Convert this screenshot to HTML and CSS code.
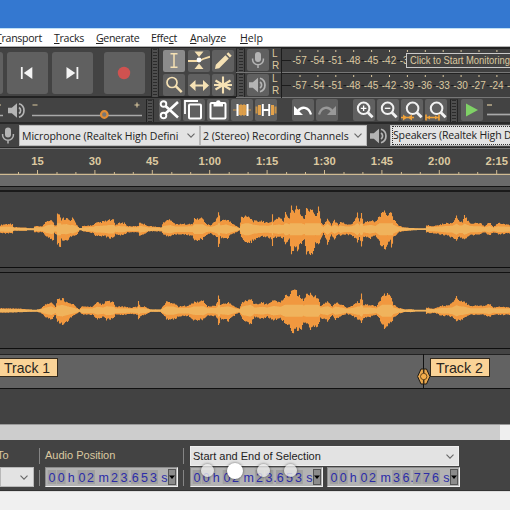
FILE: index.html
```html
<!DOCTYPE html>
<html lang="en">
<head>
<meta charset="utf-8">
<title>Audio editor</title>
<link rel="stylesheet" href="styles.css">
</head>
<body>
<svg class="defs" width="0" height="0">
  <symbol id="mic" viewBox="0 0 16 18"><rect x="5" y="1" width="6" height="10" rx="3" fill="#b4b4b4"/><path d="M2.6 7.5v1.2a5.4 5 0 0 0 10.8 0V7.5M8 13.8V17" fill="none" stroke="#b4b4b4" stroke-width="1.5"/></symbol>
  <symbol id="speaker" viewBox="0 0 18 16"><path d="M0 5.2h3.8L9 .8v14.4L3.8 10.8H0z" fill="#b4b4b4"/><path d="M11 5a3.6 3.6 0 0 1 0 6M11 1.3a7 7 0 0 1 0 13.4" fill="none" stroke="#b4b4b4" stroke-width="1.7"/></symbol>
  <symbol id="lens" viewBox="0 0 22 22"><circle cx="10.6" cy="9.3" r="5.8" fill="none" stroke="#f2f2f2" stroke-width="2"/><path d="M14.8 13.5l4.800 4.800" stroke="#f2f2f2" stroke-width="2.8"/></symbol>
  <symbol id="chevron" viewBox="0 0 8 5"><path d="M.5.6L4 4.1 7.5.6" fill="none" stroke="#666" stroke-width="1.1"/></symbol>
</svg>

<header class="titlebar"></header>
<nav class="menu">
  <span class="m-transport"><u>T</u>ransport</span><span class="m-tracks"><u>T</u>racks</span><span class="m-generate"><u>G</u>enerate</span><span class="m-effect">Effe<u>c</u>t</span><span class="m-analyze"><u>A</u>nalyze</span><span class="m-help"><u>H</u>elp</span>
</nav>

<section class="upper">
  <div class="transport">
    <button class="big first"></button>
    <button class="big"><svg width="14" height="14" viewBox="0 0 14 14"><path d="M1.8 1v12" stroke="#f4f4f4" stroke-width="1.8"/><path d="M12.300 1v12L3.800 7z" fill="#f4f4f4"/></svg></button>
    <button class="big"><svg width="14" height="14" viewBox="0 0 14 14"><path d="M12.4 1v12" stroke="#f4f4f4" stroke-width="1.8"/><path d="M1.5 1v12L10.3 7z" fill="#f4f4f4"/></svg></button>
    <button class="big record"><svg width="14" height="14"><circle cx="7" cy="7" r="6.2" fill="#cf5250"/></svg></button>
  </div>
  <i class="grip"></i>
  <div class="tools">
    <button class="sq on"><svg width="22" height="22"><path d="M7.5 3.8h7M7.5 17.2h7M11 3.8v13.4" fill="none" stroke="#f5e1b4" stroke-width="1.5"/></svg></button>
    <button class="sq"><svg width="22" height="22"><path d="M6.5 1.500h9L11 7zM6.500 19h9L11 13.500z" fill="#f5e1b4"/><path d="M0 11h11l4-2 7-2.300" fill="none" stroke="#f5dca8" stroke-width="1.800"/><circle cx="11" cy="10" r="2.400" fill="#fff"/></svg></button>
    <button class="sq"><svg width="22" height="22"><path d="M3 19l.8-4.2L13.4 5.200l3.4 3.4L7.2 18.200zM14.500 4.100l1.8-1.8 3.4 3.4-1.800 1.800z" fill="#f5e1b4"/></svg></button>
    <button class="sq"><svg width="22" height="22"><circle cx="9" cy="8.500" r="5" fill="none" stroke="#f5e1b4" stroke-width="1.7"/><path d="M12.700 12.200l6 6" stroke="#f5e1b4" stroke-width="2.4"/></svg></button>
    <button class="sq"><svg width="22" height="22"><path d="M4 11.500h15" stroke="#f5e1b4" stroke-width="2"/><path d="M7.500 6l-6 5.500 6 5.500zM15 6l6 5.500-6 5.500z" fill="#f5e1b4"/></svg></button>
    <button class="sq"><svg width="22" height="22"><path d="M11 2.500v17M3.500 6.500l15 9M18.500 6.500l-15 9M2 11h18" stroke="#f5e1b4" stroke-width="2.1"/></svg></button>
  </div>
  <div class="meters">
    <div class="meter"><i class="grip"></i><button class="sq"><svg width="16" height="18"><use href="#mic"/></svg></button><div class="lr"><span>L</span><span>R</span></div><svg class="scale" data-count="7" width="229" height="25"></svg><div class="tip"><svg width="104" height="13"><text x="3" y="10" textLength="100" lengthAdjust="spacingAndGlyphs">Click to Start Monitoring</text></svg></div></div>
    <div class="meter"><i class="grip"></i><button class="sq"><svg width="18" height="16"><use href="#speaker"/></svg></button><div class="lr"><span>L</span><span>R</span></div><svg class="scale" data-count="13" width="229" height="25"></svg></div>
  </div>
</section>

<section class="lower">
  <svg class="mixer" width="146" height="24"><path d="M0 16.500h3M32 16.500h110" stroke="#a9a9a9" stroke-width="1.7"/><path d="M32.500 6h5M134.500 6h5M137 3.500v5M0 6h1" stroke="#dcc9a0" stroke-width="1.100"/><circle cx="104.300" cy="15.500" r="3.300" fill="#777" stroke="#e28d35" stroke-width="2.200"/><use href="#speaker" x="8" y="3.500" width="18" height="16"/></svg>
  <i class="grip"></i>
  <div class="edit">
    <button class="sq"><svg width="22" height="22"><circle cx="4.500" cy="5" r="2.800" fill="none" stroke="#fff" stroke-width="1.900"/><circle cx="4.500" cy="16.500" r="2.800" fill="none" stroke="#fff" stroke-width="1.900"/><path d="M6.500 7L19 18.500M6.500 14.500L19 3" stroke="#fff" stroke-width="2.600"/></svg></button>
    <button class="sq"><svg width="22" height="22"><path d="M2 15V2h13" fill="none" stroke="#fff" stroke-width="1.800"/><rect x="6" y="5.500" width="12" height="14" rx="1" fill="none" stroke="#fff" stroke-width="2"/></svg></button>
    <button class="sq"><svg width="22" height="22"><rect x="3.500" y="4" width="15" height="15.500" rx="1" fill="none" stroke="#fff" stroke-width="2"/><path d="M6.500 3.500h2.500a2.300 2.300 0 0 1 4.600 0h2.400V7.500H6.500z" fill="#fff"/></svg></button>
    <button class="sq"><svg width="22" height="22"><path d="M2 11h18" stroke="#b98d50" stroke-width="1.300"/><rect x="7.500" y="6" width="8" height="10" fill="#d79b4b"/><path d="M10 5v12M13 5v12" stroke="#e3a24b" stroke-width="1"/><path d="M6.500 5v12M16.500 5v12" stroke="#fff" stroke-width="2"/></svg></button>
    <button class="sq"><svg width="22" height="22"><path d="M1.500 7.500v7M20.500 7.500v7" stroke="#c99347" stroke-width="2"/><path d="M4.500 6v10M17.500 6v10" stroke="#e3a24b" stroke-width="3"/><path d="M7.800 5v12M14.200 5v12M8 11h6" stroke="#fff" stroke-width="1.900"/></svg></button>
    <button class="sq undo"><svg width="22" height="22"><path d="M6 12c3.500-5 10.500-4.500 13 3.500" fill="none" stroke="#fff" stroke-width="2.300"/><path d="M2 7v9h9z" fill="#fff"/></svg></button>
    <button class="sq"><svg width="22" height="22"><path d="M16 12C12.500 7 5.500 7.500 3 15.500" fill="none" stroke="#999" stroke-width="2.300"/><path d="M20 7v9h-9z" fill="#999"/></svg></button>
    <button class="sq zoomin"><svg width="22" height="22"><use href="#lens"/><path d="M7.800 9.300h5.600M10.600 6.500v5.600" stroke="#fff" stroke-width="1.300"/></svg></button>
    <button class="sq"><svg width="22" height="22"><use href="#lens"/><path d="M7.800 9.300h5.600" stroke="#fff" stroke-width="1.300"/></svg></button>
    <button class="sq"><svg width="22" height="22"><use href="#lens" x="1"/><path d="M0 18.500h13" stroke="#f0a239" stroke-width="1.500"/><path d="M2 15.500l4 3-4 3zM11 15.500l-4 3 4 3z" fill="#f0a239"/></svg></button>
    <button class="sq"><svg width="22" height="22"><use href="#lens" x="1"/><path d="M1 15.500v6M14 15.500v6M1 18.500h13" stroke="#f0a239" stroke-width="1.600"/><path d="M2 18.500l3-2v4zM13 18.500l-3-2v4z" fill="#f0a239"/></svg></button>
  </div>
  <i class="grip"></i>
  <button class="sq play"><svg width="22" height="22"><path d="M5 4.500v13L17 11z" fill="#7fd166"/></svg></button>
  <svg class="speed" width="27" height="24"><path d="M4 6h5" stroke="#dcc9a0" stroke-width="1.200"/><path d="M4 15.500h23" stroke="#a9a9a9" stroke-width="1.700"/></svg>
</section>

<section class="devices">
  <svg class="dmic" width="16" height="19"><use href="#mic"/></svg>
  <div class="drop d1"><span>Microphone (Realtek High Defini</span><svg width="8" height="5"><use href="#chevron"/></svg></div>
  <div class="drop d2"><span>2 (Stereo) Recording Channels</span><svg width="8" height="5"><use href="#chevron"/></svg></div>
  <svg class="dspk" width="18" height="16"><use href="#speaker"/></svg>
  <div class="drop d3"><span>Speakers (Realtek High D</span></div>
</section>

<svg class="ruler" width="510" height="27"></svg>
<div class="band"></div>
<svg class="wave" id="w1" width="510" height="76"></svg>
<div class="split"></div>
<svg class="wave" id="w2" width="510" height="76"></svg>
<div class="split two"></div>
<section class="labels">
  <div class="label one"><svg width="52" height="18"><text x="5" y="14" textLength="46" lengthAdjust="spacingAndGlyphs">Track 1</text></svg></div>
  <svg class="marker" width="14" height="35" viewBox="0 0 14 35"><path d="M6.500 0v35" stroke="#111" stroke-width="1"/><path d="M4 15L.600 22.500 4 30h5.500l3.400-7.500L9.500 15z" fill="#eba94f" stroke="#1d1a15"/><path d="M6.700 15v15" stroke="#3a2c18" stroke-width="1.500"/><circle cx="6.700" cy="22.500" r="3.200" fill="#f5ae4c" stroke="#4a3213" stroke-width=".8"/></svg>
  <div class="label"><svg width="54" height="18"><text x="5" y="14" textLength="47" lengthAdjust="spacingAndGlyphs">Track 2</text></svg></div>
</section>
<div class="empty"></div>
<div class="scroll"><i></i></div>

<footer class="selection">
  <div class="col snap"><span class="cap">To</span><div class="drop"><svg width="8" height="5"><use href="#chevron"/></svg></div></div>
  <div class="sep"><i></i><i></i></div>
  <div class="col pos"><span class="cap">Audio Position</span><div class="time" data-v="00h02m23.653s"></div></div>
  <div class="sep"><i></i><i></i></div>
  <div class="col range">
    <div class="drop"><span>Start and End of Selection</span><svg width="8" height="5"><use href="#chevron"/></svg></div>
    <div class="pair"><div class="time" data-v="00h02m23.653s"></div><div class="time" data-v="00h02m36.776s"></div></div>
    <div class="dots"><i></i><i class="cur"></i><i></i><i></i></div>
  </div>
</footer>
<div class="status"></div>
<script src="app.js"></script>
</body>
</html>
```
FILE: styles.css
```css
* { box-sizing: border-box; }
body { margin: 0; width: 510px; height: 510px; overflow: hidden; background: #434343; font-family: "Open Sans", "Noto Sans", sans-serif; }
svg { display: block; flex: none; }
.defs { position: absolute; }
button { border: 0; padding: 0; margin: 0; background: #606060; border-radius: 2px; display: flex; align-items: center; justify-content: center; flex: none; }

.titlebar { height: 29px; background: #3478d0; border-bottom: 1px solid #bfe0f5; }
.menu { height: 18px; background: #fff; border-bottom: 1px solid #b5b5b5; display: flex; font-size: 10.6px; line-height: 18px; color: #222; white-space: nowrap; }
.menu span { flex: none; }
.menu u { text-underline-offset: 1px; }
.m-transport { margin-left: -4px; width: 58px; letter-spacing: -.3px; }
.m-tracks { width: 42px; letter-spacing: -.3px; }
.m-generate { width: 55px; letter-spacing: -.35px; }
.m-effect { width: 39px; letter-spacing: -.3px; }
.m-analyze { width: 50px; letter-spacing: -.3px; }

.upper { height: 50px; display: flex; border-top: 1px solid #222; }
.transport { width: 151px; display: flex; gap: 3.500px; padding-top: 3.500px; border-bottom: 1px solid #222; }
.big { width: 41.500px; height: 42px; border-radius: 3px; }
.big.first { width: 3px; border-radius: 0 3px 3px 0; }
.record { margin-left: 7px; }
.grip { display: block; flex: none; width: 8px; background: repeating-linear-gradient(#2b2b2b 0 1px, #4f4f4f 1px 3px) center / 4px 100% no-repeat #4a4a4a; border-left: 1px solid #222; border-right: 1px solid #262626; border-top: 1px solid #333; }
.tools { width: 77px; display: grid; grid-template-columns: repeat(3, 22px); grid-template-rows: 22px 22px; column-gap: 2.500px; row-gap: 1.500px; padding: 2px 0 0 4px; border-bottom: 1px solid #222; }
.sq { width: 22px; height: 22px; }
.sq.on { background: #8b8b8b; }
.meters { flex: 1; }
.meter { height: 25px; display: flex; position: relative; border-bottom: 1px solid #777; background: #404040; }
.meter .grip { width: 9px; }
.meter .sq { margin: 1px 0 0 2px; }
.lr { width: 12px; padding: 0 0 0 3px; font: 10px/12px "Liberation Sans", sans-serif; color: #dcc9a0; display: grid; }
.scale text { font: 10.500px "Liberation Sans", sans-serif; fill: #dcc9a0; }
.tip { position: absolute; left: 170px; top: 5px; width: 104px; height: 15px; border: 1px solid #c9c9c9; border-right: 0; background: #434343; }
.tip text { font: 10.800px "Liberation Sans", sans-serif; fill: #dcc9a0; }

.lower { height: 25px; display: flex; border-top: 1px solid #222; padding-top: 1px; background: #434343; }
.lower .grip { height: 23px; }
.edit { display: flex; gap: 2.200px; width: 296px; padding-left: 4.500px; }
.undo { margin-left: 12.500px; }
.zoomin { margin-left: 12.500px; }
.play { margin-left: 3px; }

.devices { height: 26px; display: flex; align-items: center; border-top: 2px solid #292929; border-bottom: 1px solid #2a2a2a; }
.drop { background: #e3e3e3; color: #222; display: flex; align-items: center; justify-content: space-between; white-space: nowrap; overflow: hidden; flex: none; font-size: 10.500px; }
.devices .drop { height: 21px; border: 1px solid #b8b8b8; padding: 0 4px 0 2px; }
.dmic { margin: 0 3px 0 0; }
.devices .d1 { width: 181px; letter-spacing: -.05px; }
.devices .d2 { width: 167px; letter-spacing: -.04px; }
.dspk { margin: 0 2px 0 3px; }
.devices .d3 { width: 130px; padding-left: 1px; }
.d3 span { outline: 1px dotted #333; outline-offset: -1px; line-height: 19px; padding-left: 1px; letter-spacing: -.15px; width: 128px; flex: none; }

.ruler { background: #434343; border-top: 1px solid #777; }
.ruler text { font: bold 11.200px "Liberation Sans", sans-serif; fill: #dcc9a0; }
.band { height: 17px; background: linear-gradient(#6a6a6a 0 11px, #151515 11px 12px, #444 12px 15px, #1a1a1a 15px 17px); }
.wave { background: #424242; border-bottom: 1px solid #0e0e0e; }
.split { height: 5px; background: linear-gradient(#444 0 4px, #111 4px); }
.split.two { height: 6px; background: linear-gradient(#444 0 5px, #222 5px); }
.labels { height: 34px; background: #626262; border-bottom: 1px solid #111; display: flex; align-items: flex-start; }
.label { width: 60px; height: 19px; margin-top: 3px; background: #fad397; border: 1px solid #332a1d; }
.label text { font: 14.500px "Liberation Sans", sans-serif; fill: #2a2520; }
.label.one { margin-left: -2px; }
.marker { margin-left: 359px; margin-top: -1px; }
.label:last-child { margin-left: -1px; }
.empty { height: 35px; background: #424242; }
.scroll { height: 16px; background: #efefef; border-top: 1px solid #999; }
.scroll i { display: block; width: 500px; height: 15px; background: #cdcdcd; }

.selection { height: 51px; display: flex; padding-top: 6px; border-bottom: 1px solid #333; }
.col { display: flex; flex-direction: column; flex: none; }
.cap { height: 21px; line-height: 18px; color: #dcc9a0; font-family: "Liberation Sans", sans-serif; font-size: 11px; white-space: nowrap; }
.snap { width: 39px; }
.snap .cap { margin-left: -3px; }
.snap .drop { width: 34px; height: 20px; justify-content: flex-end; padding-right: 5px; border: 1px solid #b8b8b8; }
.sep { width: 6px; flex: none; display: grid; grid-template-rows: 16px 16px; row-gap: 6px; padding-top: 2px; align-content: start; }
.sep i { border-left: 1px solid #858585; }
.pos { width: 138px; }
.range { width: 271px; position: relative; margin-left: 1px; }
.range > .drop { width: 269px; height: 20px; padding: 0 4px 0 2px; border: 1px solid #eee; font-family: "Liberation Sans", sans-serif; font-size: 11px; margin-bottom: 1px; }
.pair { display: flex; gap: 4px; }
.time { width: 133px; height: 20px; border: 1px solid #8c8c8c; border-right: 1px solid #f0f0f0; border-bottom: 1px solid #f0f0f0; flex: none; }
.time text { font: 12.500px "Liberation Sans", sans-serif; fill: #2c2ca8; text-anchor: middle; }
.dots { position: absolute; left: 11px; top: 16px; height: 17px; display: flex; align-items: center; }
.dots i { width: 13px; height: 13px; margin-right: 14px; border-radius: 50%; background: rgba(235,235,235,.8); box-shadow: 0 0 3px rgba(0,0,0,.55); }
.dots i:first-child { margin-right: 12.500px; }
.dots .cur { width: 16px; height: 16px; background: #fff; }
.status { height: 20px; background: #f0f0f0; border-top: 1px solid #ddd; }
```
FILE: app.js
```js
// Meter scales: one tick and one label every 3 dB.
document.querySelectorAll('.scale').forEach(function (s) {
  var out = '';
  for (var i = 0; i < 13; i++) {
    var x = 18.5 + i * 17.9;
    out += '<path d="M' + (x + 0.5) + ' 2v2" stroke="#dcc9a0"/>';
    out += '<path d="M' + (x + 8) + ' 12.5h3" stroke="#1c1c1c"/>';
    if (i < +s.dataset.count) out += '<text x="' + x + '" y="15.800" text-anchor="middle" textLength="14.500" lengthAdjust="spacingAndGlyphs">-' + (57 - i * 3) + '</text>';
  }
  s.innerHTML = '<path d="M0 .5h229" stroke="#222"/><path d="M.5 0v25M0 12.5h10" stroke="#1c1c1c"/>' + out;
});

// Timeline: a label every 15 seconds, minor ticks every 5.
(function () {
  var out = '<path d="M0 25.5h510" stroke="#d0bb93" stroke-width="1.5"/>';
  var names = ['15', '30', '45', '1:00', '1:15', '1:30', '1:45', '2:00', '2:15'];
  names.forEach(function (n, i) {
    var x = 37.5 + i * 57.4;
    out += '<text x="' + x + '" y="15.5" text-anchor="middle">' + n + '</text>';
    out += '<path d="M' + x + ' 21v4M' + (x - 19) + ' 23v2M' + (x + 19.5) + ' 23v2" stroke="#d0bb93"/>';
  });
  document.querySelector('.ruler').innerHTML = out;
})();

// Envelopes as x, peak above, peak below.
var left = [0,4,4, 5,5,4, 12,5,4, 13,2,1.5, 26,1.5,1.5, 27,.8,.8, 33,.8,.8, 34,3,3, 42,3,3, 46,8,7, 51,10,10, 53,7,11, 54,4,4, 56,4,5, 57,15,15, 60,13,17, 61,10,10, 66,11,11, 70,8,8, 72,11,7, 76,5,6, 79,1,1, 81,1,1, 82,3,2, 93,4,4, 95,6,6, 105,8,7, 109,9,9, 113,9,9, 115,4,5, 118,6,6, 124,6,5, 127,3,3, 138,3,3, 139,7,6, 144,5,5, 148,3,2, 161,2,2, 163,7,6, 170,10,7, 175,5,5, 192,5,6, 194,10,11, 202,11,10, 206,5,6, 210,4,4, 214,7,6, 217,11,8, 218,19,20, 220,8,8, 226,10,10, 230,7,6, 236,3,3, 239,1,1, 241,12,9, 247,14,15, 253,8,11, 260,8,7, 268,6,8, 271,8,9, 272,15,17, 273,8,8, 278,12,8, 283,8,9, 285,16,14, 289,11,10, 291,24,25, 294,17,18, 297,23,20, 302,12,12, 304,10,10, 306,20,24, 312,20,24, 315,12,14, 318,21,16, 321,7,8, 323,4,4, 327,10,14, 331,4,5, 334,9,10, 338,4,5, 340,8,7, 345,5,5, 351,5,6, 354,8,8, 357,16,12, 359,8,8, 361,15,17, 363,6,7, 370,9,9, 375,7,6, 380,14,15, 385,18,19, 387,12,14, 390,17,12, 391,18,19, 393,10,8, 398,4,3, 402,2,2, 412,1,1, 418,.5,.5, 425,.5,.5, 426,4,3, 434,3,4, 445,6,6, 452,6,8, 456,13,11, 459,7,8, 462,7,9, 464,13,11, 470,6,6, 480,6,5, 484,3,3, 489,7,6, 493,2,3, 498,6,5, 510,4,4];
var right = [0,2.5,2, 20,2,1.5, 28,1,1, 36,.7,.7, 40,2,2, 45,6,6, 51,9,9, 55,4,4, 57,11,11, 62,12,13, 67,8,10, 73,6,5, 79,1,1, 81,4,3, 84,4,4, 92,4,4, 97,8,8, 103,6,6, 106,10,9, 113,8,8, 115,4,4, 123,4,4, 130,3,3, 137,4,4, 138,9,8, 140,4,5, 145,4,4, 150,1,1, 160,1,1, 166,9,8, 173,8,9, 178,4,6, 188,5,5, 193,8,9, 203,10,9, 207,4,5, 215,5,5, 217,8,8, 218,17,16, 220,6,8, 228,8,10, 236,3,3, 239,2,2, 242,9,9, 250,12,14, 252,10,10, 254,6,6, 258,7,7, 262,8,8, 267,6,6, 273,11,9, 280,8,8, 286,16,13, 289,15,15, 292,23,23, 294,22,19, 298,15,18, 300,14,20, 303,10,12, 306,16,12, 310,18,18, 313,14,14, 317,14,18, 320,5,7, 327,9,10, 332,4,4, 335,8,9, 342,6,5, 346,3,3, 352,5,5, 357,9,8, 359,8,9, 361,16,12, 363,6,7, 370,6,6, 376,4,4, 380,11,10, 384,16,17, 387,16,14, 391,14,12, 393,6,7, 398,3,3, 405,1,1, 410,1.5,1.5, 415,.6,.6, 425,.6,.6, 426,3,3, 434,2,2, 441,5,5, 447,5,5, 452,8,6, 456,14,10, 459,9,10, 463,9,8, 470,5,4, 483,5,4, 489,7,6, 493,3,4, 500,4,4, 510,3,4];

function wave(id, env, mid) {
  var outer = '', inner = '', k = 0;
  for (var x = 0; x < 510; x++) {
    while (k + 3 < env.length - 3 && env[k + 3] <= x) k += 3;
    var t = (x - env[k]) / (env[k + 3] - env[k]);
    var r1 = Math.abs(Math.sin(x * 12.9898) * 43758.5) % 1;
    var r2 = Math.abs(Math.sin(x * 78.233) * 24634.6) % 1;
    var up = env[k + 1] + t * (env[k + 4] - env[k + 1]);
    var dn = env[k + 2] + t * (env[k + 5] - env[k + 2]);
    var core = Math.min((up + dn) * 0.2 + 0.7, 6);
    up *= 0.87 + 0.25 * r1;
    dn *= 0.87 + 0.25 * r2;
    outer += 'M' + (x + 0.5) + ' ' + (mid - up).toFixed(1) + 'V' + (mid + dn).toFixed(1);
    inner += 'M' + (x + 0.5) + ' ' + (mid - core).toFixed(1) + 'V' + (mid + core).toFixed(1);
  }
  document.getElementById(id).innerHTML = '<path d="' + outer + '" stroke="#f1983f" stroke-width="1.1"/><path d="' + inner + '" stroke="#f0b35c" stroke-width="1.1"/>';
}
wave('w1', left, 37.2);
wave('w2', right, 37.7);

// Time fields: each digit sits in its own darker cell.
var cx = [6, 15.3, 25.3, 36, 44.6, 57.6, 68.6, 78, 84, 89.3, 98.6, 107.6, 118.3];
document.querySelectorAll('.time').forEach(function (f) {
  var out = '<rect width="131" height="18" fill="#b3b3b3"/>';
  f.dataset.v.split('').forEach(function (c, i) {
    if (/\d/.test(c)) out += '<rect x="' + (cx[i] - 4.3) + '" y="2" width="8.6" height="14" fill="#a0a0a0"/>';
    out += '<text x="' + cx[i] + '" y="13.5">' + c + '</text>';
  });
  out += '<rect x="122.5" y="1.5" width="7" height="15" fill="#8c8c8c" stroke="#555"/><path d="M123 7.5h6l-3 3.5z" fill="#000"/>';
  f.innerHTML = '<svg width="131" height="18">' + out + '</svg>';
});
```
